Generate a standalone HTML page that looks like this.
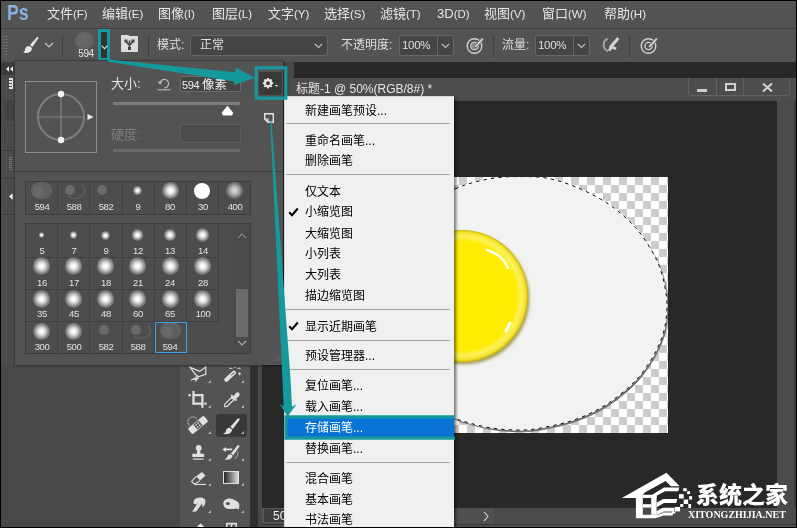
<!DOCTYPE html><html lang="zh-CN"><head><meta charset="utf-8"><title>Photoshop</title><style>
html,body{margin:0;padding:0;}
body{width:797px;height:528px;overflow:hidden;background:#535353;position:relative;
 font-family:"Liberation Sans","Noto Sans CJK SC",sans-serif;font-size:12px;color:#e6e6e6;}
.a{position:absolute;}
.t{position:absolute;white-space:nowrap;}
svg{position:absolute;overflow:visible;}
.mi{position:absolute;left:305px;color:#000;font-size:12px;line-height:20px;height:20px;white-space:nowrap;}
.ms{position:absolute;left:286px;width:164px;height:1px;background:#a5a5a5;}
.mb{position:absolute;top:0;height:27px;line-height:27px;font-size:13px;color:#e6e6e6;white-space:nowrap;}
.ob{position:absolute;font-size:12px;color:#dedede;white-space:nowrap;line-height:20px;height:20px;top:35px;}
.sep{position:absolute;width:1px;top:35px;height:22px;background:#3f3f3f;}
.bn{position:absolute;width:32px;text-align:center;font-size:9.5px;letter-spacing:-0.4px;line-height:12px;height:12px;color:#e4e4e4;}
.dot{position:absolute;border-radius:50%;}
.t,.mb,.ob,.mi,.bn{will-change:transform;}
.tri{position:absolute;width:0;height:0;border-left:3px solid transparent;border-bottom:3px solid #b0b0b0;}
</style></head><body>
<div class="a" style="left:0;top:0;width:797px;height:28px;background:#535353"></div>
<div class="a" style="left:0;top:28px;width:797px;height:1px;background:#404040"></div>
<div class="t" style="left:7px;top:1px;font-size:22px;line-height:24px;font-weight:bold;color:#8bb3e2;transform-origin:left center;transform:scaleX(0.8)">Ps</div>
<div class="mb" style="left:47px">文件<span style="font-size:11.5px">(F)</span></div>
<div class="mb" style="left:102px">编辑<span style="font-size:11.5px">(E)</span></div>
<div class="mb" style="left:158px">图像<span style="font-size:11.5px">(I)</span></div>
<div class="mb" style="left:212px">图层<span style="font-size:11.5px">(L)</span></div>
<div class="mb" style="left:268px">文字<span style="font-size:11.5px">(Y)</span></div>
<div class="mb" style="left:324px">选择<span style="font-size:11.5px">(S)</span></div>
<div class="mb" style="left:380px">滤镜<span style="font-size:11.5px">(T)</span></div>
<div class="mb" style="left:437px">3D<span style="font-size:11.5px">(D)</span></div>
<div class="mb" style="left:484px">视图<span style="font-size:11.5px">(V)</span></div>
<div class="mb" style="left:542px">窗口<span style="font-size:11.5px">(W)</span></div>
<div class="mb" style="left:604px">帮助<span style="font-size:11.5px">(H)</span></div>
<div class="a" style="left:0;top:29px;width:797px;height:33px;background:#535353"></div>
<div class="a" style="left:3px;top:36px;width:5px;height:20px;background:repeating-linear-gradient(#6a6a6a 0 1px,transparent 1px 3px)"></div>
<svg style="left:20px;top:34px" width="22" height="22" viewBox="0 0 22 22"><path d="M17.5 2.5 L10 11 L12.3 13 L18.6 4 Z" fill="#e8e8e8"/><path d="M9 12 C6.5 12 5 14 4.8 16.5 C4.7 17.5 3.8 18.3 3 18.6 C5.5 19.6 9.5 19 11.3 16.5 C12.2 15.2 12 13.8 11.3 13.2 Z" fill="#e8e8e8"/></svg>
<svg style="left:44px;top:42px" width="10" height="7" viewBox="0 0 10 7"><path d="M1 1 L5 5 L9 1" fill="none" stroke="#c8c8c8" stroke-width="1.2"/></svg>
<div class="sep" style="left:62px"></div>
<div class="dot" style="left:75px;top:32px;width:19px;height:17px;background:radial-gradient(ellipse at 45% 45%,#6a6a6a 0,#646464 60%,#5c5c5c 100%)"></div>
<div class="t" style="left:71px;top:48px;width:30px;text-align:center;font-size:10px;letter-spacing:-0.4px;line-height:11px;color:#e8e8e8">594</div>
<div class="a" style="left:98.2px;top:29.2px;width:6px;height:25.6px;background:#333;border:3px solid #149a9c"></div>
<svg style="left:100.7px;top:44.5px" width="7" height="5" viewBox="0 0 7 5"><path d="M0.6 0.6 L3.5 3.6 L6.4 0.6" fill="none" stroke="#e0e0e0" stroke-width="1.1"/></svg>
<div class="a" style="left:121px;top:36px;width:17px;height:16px;background:#dcdcdc;border-radius:1px"></div>
<div class="a" style="left:121px;top:35px;width:8px;height:3px;background:#dcdcdc;border-radius:1px"></div>
<svg style="left:121px;top:36px" width="17" height="16" viewBox="0 0 17 16"><path d="M8.5 13.5 L8.5 8 M8.5 9.5 L5 5.5 M8.5 9.5 L12 5.5 M8.5 8 L8.5 4.5" stroke="#444" stroke-width="1.6" fill="none"/><rect x="7" y="11" width="3" height="3" fill="#444"/><rect x="3.5" y="3.5" width="3" height="3" fill="#444"/><rect x="10.5" y="3.5" width="3" height="3" fill="#444"/></svg>
<div class="sep" style="left:148px"></div>
<div class="ob" style="left:157px">模式:</div>
<div class="a" style="left:190px;top:35px;width:136px;height:19px;background:#454545;border:1px solid #666;border-radius:3px"></div>
<div class="ob" style="left:200px;top:35px;line-height:21px">正常</div>
<svg style="left:314px;top:43px" width="9" height="6" viewBox="0 0 9 6"><path d="M0.8 0.8 L4.5 4.5 L8.2 0.8" fill="none" stroke="#c8c8c8" stroke-width="1.1"/></svg>
<div class="ob" style="left:341px">不透明度:</div>
<div class="a" style="left:399px;top:35px;width:53px;height:19px;background:#454545;border:1px solid #666;border-radius:3px"></div>
<div class="a" style="left:437px;top:36px;width:1px;height:19px;background:#666"></div>
<div class="ob" style="left:402px;top:35px;line-height:21px;font-size:11.5px;letter-spacing:-0.3px">100%</div>
<svg style="left:441px;top:43px" width="9" height="6" viewBox="0 0 9 6"><path d="M0.8 0.8 L4.5 4.5 L8.2 0.8" fill="none" stroke="#c8c8c8" stroke-width="1.1"/></svg>
<svg style="left:465px;top:34px" width="22" height="22" viewBox="0 0 22 22"><circle cx="9.5" cy="12" r="7.3" fill="none" stroke="#d0d0d0" stroke-width="1.4"/><circle cx="9.5" cy="12" r="4" fill="#8d8d8d" stroke="#d0d0d0" stroke-width="1"/><path d="M9 12.5 L17 3.5 L19 5.3 L11 14 Z" fill="#d0d0d0" stroke="#535353" stroke-width="0.8"/></svg>
<div class="sep" style="left:493px"></div>
<div class="ob" style="left:502px">流量:</div>
<div class="a" style="left:535px;top:35px;width:53px;height:19px;background:#454545;border:1px solid #666;border-radius:3px"></div>
<div class="a" style="left:573px;top:36px;width:1px;height:19px;background:#666"></div>
<div class="ob" style="left:538px;top:35px;line-height:21px;font-size:11.5px;letter-spacing:-0.3px">100%</div>
<svg style="left:577px;top:43px" width="9" height="6" viewBox="0 0 9 6"><path d="M0.8 0.8 L4.5 4.5 L8.2 0.8" fill="none" stroke="#c8c8c8" stroke-width="1.1"/></svg>
<svg style="left:600px;top:35px" width="22" height="20" viewBox="0 0 26 24"><path d="M9 4.5 C4.5 6 3 11 5 15.5 C6 17.5 8 19 9.5 19.5" fill="none" stroke="#a4a4a4" stroke-width="2.4"/><path d="M20.5 2.5 L11.5 12.5 L9.5 18.5 L12.5 19.5 L13.8 16.5 L18.5 18 L19.8 15.2 L16 13.5 L23 5 Z" fill="#d2d2d2"/></svg>
<div class="sep" style="left:629px"></div>
<svg style="left:639px;top:34px" width="22" height="22" viewBox="0 0 22 22"><circle cx="9.5" cy="12" r="7.3" fill="none" stroke="#d0d0d0" stroke-width="1.4"/><circle cx="9.5" cy="12" r="3.6" fill="none" stroke="#d0d0d0" stroke-width="1.3"/><path d="M9 12.5 L17 3.5 L19 5.3 L11 14 Z" fill="#d0d0d0" stroke="#535353" stroke-width="0.8"/></svg>
<div class="a" style="left:0;top:62px;width:15px;height:304px;background:#4b4b4b"></div>
<div class="a" style="left:0;top:62px;width:15px;height:13px;background:#3c3c3c"></div>
<svg style="left:6px;top:66px" width="8" height="6" viewBox="0 0 8 6"><path d="M0 3 L3 0.3 V5.7 Z M4 3 L7 0.3 V5.7 Z" fill="#ececec"/></svg>
<div class="a" style="left:9px;top:78px;width:4px;height:11px;background:#e4e4e4"></div>
<div class="a" style="left:9px;top:80px;width:3px;height:7px;background:repeating-linear-gradient(#4b4b4b 0 1px,transparent 1px 3px)"></div>
<div class="a" style="left:5px;top:100px;width:12px;height:20px;background:#434343;border-radius:3px"></div>
<div class="a" style="left:4px;top:125px;width:12px;height:21px;border:1px solid #424242;border-radius:3px"></div>
<div class="a" style="left:0;top:150px;width:15px;height:1px;background:#3e3e3e"></div>
<div class="a" style="left:9px;top:157px;width:3px;height:13px;background:repeating-linear-gradient(#777 0 1px,transparent 1px 2px)"></div>
<div class="a" style="left:0;top:178px;width:15px;height:1px;background:#3e3e3e"></div>
<div class="a" style="left:0;top:214px;width:15px;height:1px;background:#3e3e3e"></div>
<svg style="left:9px;top:193px" width="4" height="7" viewBox="0 0 4 7"><path d="M0 3.5 L3.6 0.3 V6.7 Z" fill="#f0f0f0"/></svg>
<div class="a" style="left:0;top:366px;width:180px;height:162px;background:#484848"></div>
<div class="a" style="left:180px;top:366px;width:70px;height:162px;background:#535353"></div>
<div class="a" style="left:250px;top:366px;width:8px;height:162px;background:#2f2f2f"></div>
<div class="a" style="left:258px;top:366px;width:4px;height:162px;background:#484848"></div>
<div class="a" style="left:216px;top:414px;width:31px;height:23px;background:#383838;border-radius:3px"></div>
<svg style="left:0;top:0" width="797" height="528" viewBox="0 0 797 528"><path d="M190.3 367.4 L199.7 371.4 L205.8 366.9 L205.8 374.3 L198.2 376.9 L194.8 373.8 Z" fill="none" stroke="#e0e0e0" stroke-width="1.2" stroke-linejoin="miter"/><circle cx="197.2" cy="377" r="1.2" fill="none" stroke="#e0e0e0" stroke-width="0.9"/><path d="M196.2 377.6 L190.8 380.2 M197.6 378.2 L195.3 381.6 M192.5 379.5 L198.5 378.4" stroke="#e0e0e0" stroke-width="1.1" fill="none"/><path d="M226.3 379.7 L233.9 372.7" stroke="#e0e0e0" stroke-width="4.2" stroke-linecap="round"/><path d="M231.6 374.8 L233.8 372.8" stroke="#9a9a9a" stroke-width="1.6" stroke-linecap="round"/><path d="M229.3 368.3 H232.3 M237.6 368.3 H240.6 M239.6 372.3 V375.3 M238.1 373.8 H241.1 M235 366.5 V368" stroke="#e0e0e0" stroke-width="1" fill="none"/><path d="M193.5 391 V404.8 M193.5 395.2 H203.6 M202.4 394.1 V407.8 M192.3 403.6 H203.6" stroke="#e0e0e0" stroke-width="2.3" fill="none"/><rect x="188.4" y="394.1" width="2.4" height="2.2" fill="#e0e0e0"/><rect x="204.4" y="402.5" width="2.3" height="2.2" fill="#e0e0e0"/><path d="M224.6 406.6 L224.9 404.2 L231.6 397.4 L234 399.8 L227.2 406.3 Z" fill="#535353" stroke="#e0e0e0" stroke-width="1.2" stroke-linejoin="round"/><path d="M230.5 396 L235.8 401.3 L237.2 399.9 L231.9 394.6 Z" fill="#e0e0e0"/><path d="M233.2 396.2 L236 393.2 Q238 391.6 239.3 393 Q240.4 394.4 238.9 396.2 L235.8 398.9 Z" fill="#e0e0e0"/><g transform="rotate(-40 198 425)"><rect x="187.6" y="421.2" width="20.8" height="7.6" rx="1.6" fill="#e0e0e0"/><rect x="194.6" y="421.9" width="6.8" height="6.2" fill="#535353"/><circle cx="196.7" cy="423.7" r="0.85" fill="#e0e0e0"/><circle cx="199.3" cy="423.7" r="0.85" fill="#e0e0e0"/><circle cx="196.7" cy="426.3" r="0.85" fill="#e0e0e0"/><circle cx="199.3" cy="426.3" r="0.85" fill="#e0e0e0"/></g><path d="M189.2 425.5 A4.3 4.3 0 0 1 196.6 418.6" fill="none" stroke="#e0e0e0" stroke-width="1.1" stroke-dasharray="1 1"/><path d="M237.8 418.4 L230.4 426.8 L232.8 429 L239.6 420 Q240 418 237.8 418.4 Z" fill="#e0e0e0"/><path d="M229.8 427.8 C227.6 427.6 226.2 429.2 225.9 431.2 C225.8 432.2 224.4 433.2 222.9 433.6 C225.4 434.8 229.4 434.4 231.2 432 C232.2 430.7 232.3 429.8 231.7 429.3 Z" fill="#e0e0e0"/><circle cx="198.7" cy="448" r="2.9" fill="#e0e0e0"/><path d="M197.3 450 H200.1 L200.6 454 H196.8 Z" fill="#e0e0e0"/><rect x="192.3" y="453.7" width="11.8" height="3.4" rx="0.6" fill="#e0e0e0"/><rect x="192.8" y="458.5" width="10.8" height="1.2" fill="#e0e0e0"/><path d="M237.8 445 L231 453.4 L233.2 455.4 L239.4 446.6 Q239.8 444.8 237.8 445 Z" fill="#e0e0e0"/><path d="M230.6 454.2 C228.8 454 227.5 455.4 227.2 457 C227.1 458 225.9 458.8 224.8 459.2 C226.9 460.2 230.2 459.8 231.7 457.8 C232.5 456.7 232.6 455.9 232.1 455.4 Z" fill="#e0e0e0"/><path d="M222.4 449.4 L226 446.9 V448.6 H232.2 V450.2 H226 V451.9 Z" fill="#e0e0e0"/><path d="M237.6 451.6 A6 6 0 0 1 234.4 458.6" fill="none" stroke="#e0e0e0" stroke-width="1.1" stroke-dasharray="1 1"/><path d="M196.2 476.3 L201.8 471.9 L205.6 475.5 L200 480.6 Z" fill="#e0e0e0"/><path d="M196.2 476.3 L191.6 481.4 L194.6 484.2 L200 480.6" fill="none" stroke="#e0e0e0" stroke-width="1.1"/><path d="M194.4 484.4 H206" stroke="#e0e0e0" stroke-width="1.1"/><path d="M193.6 503.6 Q193 499.4 197 498 Q201.6 496.8 204.6 499 Q206.2 501.6 204.6 505 L202.6 507.6 L202 503.4 L196.2 511.6 L192.2 511.8 L197.6 503 Q195.6 505.2 193.6 503.6 Z" fill="#e0e0e0"/><path d="M223.2 503 Q224.4 499 228.6 498.6 Q234.6 498.8 238.6 502.8 Q239.8 504.6 239.2 507.4 L238.6 509.6 L236.4 508.4 Q231 509.8 226.2 508.4 Q223.2 506.6 223.2 503 Z" fill="#e0e0e0"/><ellipse cx="227.9" cy="503.5" rx="2" ry="1.6" fill="#535353"/><path d="M200.6 523.2 L205.4 528 H195.8 Z" fill="#e0e0e0"/><path d="M226 522.8 H237 V528 H235.4 V524.6 H232.3 V528 H230.7 V524.6 H227.6 V528 H226 Z" fill="#e0e0e0"/></svg>
<div class="a" style="left:222.7px;top:471px;width:14.3px;height:10.6px;border:1.2px solid #e0e0e0;background:linear-gradient(90deg,#262626,#d8d8d8)"></div>
<div class="tri" style="left:208.0px;top:379.5px"></div>
<div class="tri" style="left:241.0px;top:379.5px"></div>
<div class="tri" style="left:208.0px;top:405.0px"></div>
<div class="tri" style="left:241.0px;top:405.0px"></div>
<div class="tri" style="left:208.0px;top:430.6px"></div>
<div class="tri" style="left:241.0px;top:430.6px"></div>
<div class="tri" style="left:208.0px;top:457.5px"></div>
<div class="tri" style="left:241.0px;top:457.5px"></div>
<div class="tri" style="left:208.0px;top:482.5px"></div>
<div class="tri" style="left:241.0px;top:482.5px"></div>
<div class="tri" style="left:208.0px;top:510.0px"></div>
<div class="tri" style="left:241.0px;top:510.0px"></div>
<div class="a" style="left:283px;top:62px;width:11px;height:40px;background:#474747"></div>
<div class="a" style="left:294px;top:62px;width:503px;height:16px;background:#282828"></div>
<div class="a" style="left:262px;top:101px;width:535px;height:427px;background:#282828"></div>
<div class="a" style="left:290px;top:78px;width:506px;height:23px;background:#4d4d4d;border-radius:0 5px 0 0"></div>
<div class="t" style="left:296px;top:78px;font-size:12px;line-height:23px;color:#e4e4e4">标题-1 @ 50%(RGB/8#) *</div>
<div class="a" style="left:688px;top:78px;width:102px;height:18px;border:1px solid #626262;border-top:none;border-radius:0 0 3px 3px;box-sizing:border-box"></div>
<div class="a" style="left:716px;top:78px;width:1px;height:18px;background:#626262"></div>
<div class="a" style="left:743px;top:78px;width:1px;height:18px;background:#626262"></div>
<div class="a" style="left:697px;top:89px;width:10px;height:3px;background:#d0d0d0"></div>
<div class="a" style="left:725px;top:83px;width:7px;height:4px;border:2px solid #d0d0d0"></div>
<svg style="left:762px;top:83px" width="11" height="9" viewBox="0 0 11 9"><path d="M1 0.5 L10 8.5 M10 0.5 L1 8.5" stroke="#d0d0d0" stroke-width="2.2"/></svg>
<div class="a" style="left:777px;top:101px;width:17px;height:407px;background:#4a4a4a"></div>
<div class="a" style="left:794px;top:101px;width:2px;height:427px;background:#3a3a3a"></div>
<div class="a" style="left:262px;top:508px;width:534px;height:16px;background:#4a4a4a"></div>
<div class="a" style="left:262px;top:508px;width:232px;height:16px;background:#505050"></div>
<div class="a" style="left:262px;top:524px;width:534px;height:1px;background:#383838"></div>
<div class="a" style="left:262px;top:525px;width:534px;height:3px;background:#4d4d4d"></div>
<div class="a" style="left:263px;top:508px;width:30px;height:15px;background:#3e3e3e;border:1px solid #5a5a5a;box-sizing:border-box"></div>
<div class="t" style="left:273px;top:509px;font-size:12px;line-height:14px;color:#eee">50%</div>
<svg style="left:483px;top:511px" width="6" height="11" viewBox="0 0 6 11"><path d="M1 0.8 L5 5.5 L1 10.2" fill="none" stroke="#d0d0d0" stroke-width="1.1"/></svg>
<div class="a" style="left:378px;top:177px;width:290px;height:256px;overflow:hidden;background-color:#fff;background-image:linear-gradient(45deg,#ccc 25%,transparent 25%,transparent 75%,#ccc 75%),linear-gradient(45deg,#ccc 25%,transparent 25%,transparent 75%,#ccc 75%);background-size:16px 16px;background-position:9px 0,17px 8px">
<svg style="left:0;top:0" width="290" height="256" viewBox="378 177 290 256"><defs><radialGradient id="yk" cx="50%" cy="50%" r="50%"><stop offset="0" stop-color="#ffec00"/><stop offset="0.82" stop-color="#ffec00"/><stop offset="0.90" stop-color="#fff15c"/><stop offset="0.96" stop-color="#f5e534"/><stop offset="1" stop-color="#cdb900"/></radialGradient><filter id="bl" x="-20%" y="-20%" width="140%" height="140%"><feGaussianBlur stdDeviation="1.6"/></filter><filter id="bl2" x="-20%" y="-20%" width="140%" height="140%"><feGaussianBlur stdDeviation="0.7"/></filter></defs><path d="M455.0 189.0 C462.8 185.5 467.8 183.9 475.0 182.0 C482.2 180.1 490.3 178.5 498.0 177.6 C505.7 176.7 513.2 176.6 521.0 176.6 C528.8 176.6 537.2 176.6 545.0 177.8 C552.8 179.0 560.5 181.4 568.0 184.0 C575.5 186.6 582.5 189.6 590.0 193.4 C597.5 197.2 605.1 201.3 612.7 207.0 C620.3 212.7 629.0 220.3 635.5 227.5 C642.0 234.7 647.2 243.2 651.4 250.2 C655.6 257.2 658.2 263.2 660.5 269.5 C662.8 275.8 663.9 281.7 665.0 287.7 C666.1 293.7 667.1 298.4 667.0 305.3 C666.9 312.2 666.1 321.7 664.3 329.2 C662.5 336.7 659.8 343.3 656.3 350.4 C652.8 357.5 647.4 365.6 643.0 371.6 C638.6 377.6 635.3 381.1 629.8 386.2 C624.3 391.3 616.5 397.5 610.0 402.0 C603.5 406.5 597.2 409.9 590.6 413.1 C584.0 416.3 577.2 418.9 570.5 421.1 C563.8 423.3 557.1 424.7 550.4 426.1 C543.7 427.5 537.0 429.0 530.3 429.6 C523.6 430.2 516.9 430.1 510.2 429.8 C503.5 429.5 496.9 428.9 490.2 427.8 C483.5 426.7 475.9 424.7 470.0 423.1 C464.1 421.5 462.5 421.5 455.0 418.1 C447.5 414.8 434.2 409.4 425.0 403.0 C415.8 396.6 406.8 389.7 400.0 380.0 C393.2 370.3 387.7 357.5 384.0 345.0 C380.3 332.5 378.0 318.8 378.0 305.0 C378.0 291.2 380.0 275.3 384.0 262.0 C388.0 248.7 394.7 234.8 402.0 225.0 C409.3 215.2 419.2 209.0 428.0 203.0 C436.8 197.0 447.2 192.5 455.0 189.0 Z" transform="translate(1.3 1.7)" fill="#6a6a6a" stroke="#6a6a6a" stroke-width="0.8" filter="url(#bl2)"/><path d="M455.0 189.0 C462.8 185.5 467.8 183.9 475.0 182.0 C482.2 180.1 490.3 178.5 498.0 177.6 C505.7 176.7 513.2 176.6 521.0 176.6 C528.8 176.6 537.2 176.6 545.0 177.8 C552.8 179.0 560.5 181.4 568.0 184.0 C575.5 186.6 582.5 189.6 590.0 193.4 C597.5 197.2 605.1 201.3 612.7 207.0 C620.3 212.7 629.0 220.3 635.5 227.5 C642.0 234.7 647.2 243.2 651.4 250.2 C655.6 257.2 658.2 263.2 660.5 269.5 C662.8 275.8 663.9 281.7 665.0 287.7 C666.1 293.7 667.1 298.4 667.0 305.3 C666.9 312.2 666.1 321.7 664.3 329.2 C662.5 336.7 659.8 343.3 656.3 350.4 C652.8 357.5 647.4 365.6 643.0 371.6 C638.6 377.6 635.3 381.1 629.8 386.2 C624.3 391.3 616.5 397.5 610.0 402.0 C603.5 406.5 597.2 409.9 590.6 413.1 C584.0 416.3 577.2 418.9 570.5 421.1 C563.8 423.3 557.1 424.7 550.4 426.1 C543.7 427.5 537.0 429.0 530.3 429.6 C523.6 430.2 516.9 430.1 510.2 429.8 C503.5 429.5 496.9 428.9 490.2 427.8 C483.5 426.7 475.9 424.7 470.0 423.1 C464.1 421.5 462.5 421.5 455.0 418.1 C447.5 414.8 434.2 409.4 425.0 403.0 C415.8 396.6 406.8 389.7 400.0 380.0 C393.2 370.3 387.7 357.5 384.0 345.0 C380.3 332.5 378.0 318.8 378.0 305.0 C378.0 291.2 380.0 275.3 384.0 262.0 C388.0 248.7 394.7 234.8 402.0 225.0 C409.3 215.2 419.2 209.0 428.0 203.0 C436.8 197.0 447.2 192.5 455.0 189.0 Z" fill="#f2f2f2"/><path d="M455.0 189.0 C462.8 185.5 467.8 183.9 475.0 182.0 C482.2 180.1 490.3 178.5 498.0 177.6 C505.7 176.7 513.2 176.6 521.0 176.6 C528.8 176.6 537.2 176.6 545.0 177.8 C552.8 179.0 560.5 181.4 568.0 184.0 C575.5 186.6 582.5 189.6 590.0 193.4 C597.5 197.2 605.1 201.3 612.7 207.0 C620.3 212.7 629.0 220.3 635.5 227.5 C642.0 234.7 647.2 243.2 651.4 250.2 C655.6 257.2 658.2 263.2 660.5 269.5 C662.8 275.8 663.9 281.7 665.0 287.7 C666.1 293.7 667.1 298.4 667.0 305.3 C666.9 312.2 666.1 321.7 664.3 329.2 C662.5 336.7 659.8 343.3 656.3 350.4 C652.8 357.5 647.4 365.6 643.0 371.6 C638.6 377.6 635.3 381.1 629.8 386.2 C624.3 391.3 616.5 397.5 610.0 402.0 C603.5 406.5 597.2 409.9 590.6 413.1 C584.0 416.3 577.2 418.9 570.5 421.1 C563.8 423.3 557.1 424.7 550.4 426.1 C543.7 427.5 537.0 429.0 530.3 429.6 C523.6 430.2 516.9 430.1 510.2 429.8 C503.5 429.5 496.9 428.9 490.2 427.8 C483.5 426.7 475.9 424.7 470.0 423.1 C464.1 421.5 462.5 421.5 455.0 418.1 C447.5 414.8 434.2 409.4 425.0 403.0 C415.8 396.6 406.8 389.7 400.0 380.0 C393.2 370.3 387.7 357.5 384.0 345.0 C380.3 332.5 378.0 318.8 378.0 305.0 C378.0 291.2 380.0 275.3 384.0 262.0 C388.0 248.7 394.7 234.8 402.0 225.0 C409.3 215.2 419.2 209.0 428.0 203.0 C436.8 197.0 447.2 192.5 455.0 189.0 Z" fill="none" stroke="#fff" stroke-width="1.1"/><path d="M455.0 189.0 C462.8 185.5 467.8 183.9 475.0 182.0 C482.2 180.1 490.3 178.5 498.0 177.6 C505.7 176.7 513.2 176.6 521.0 176.6 C528.8 176.6 537.2 176.6 545.0 177.8 C552.8 179.0 560.5 181.4 568.0 184.0 C575.5 186.6 582.5 189.6 590.0 193.4 C597.5 197.2 605.1 201.3 612.7 207.0 C620.3 212.7 629.0 220.3 635.5 227.5 C642.0 234.7 647.2 243.2 651.4 250.2 C655.6 257.2 658.2 263.2 660.5 269.5 C662.8 275.8 663.9 281.7 665.0 287.7 C666.1 293.7 667.1 298.4 667.0 305.3 C666.9 312.2 666.1 321.7 664.3 329.2 C662.5 336.7 659.8 343.3 656.3 350.4 C652.8 357.5 647.4 365.6 643.0 371.6 C638.6 377.6 635.3 381.1 629.8 386.2 C624.3 391.3 616.5 397.5 610.0 402.0 C603.5 406.5 597.2 409.9 590.6 413.1 C584.0 416.3 577.2 418.9 570.5 421.1 C563.8 423.3 557.1 424.7 550.4 426.1 C543.7 427.5 537.0 429.0 530.3 429.6 C523.6 430.2 516.9 430.1 510.2 429.8 C503.5 429.5 496.9 428.9 490.2 427.8 C483.5 426.7 475.9 424.7 470.0 423.1 C464.1 421.5 462.5 421.5 455.0 418.1 C447.5 414.8 434.2 409.4 425.0 403.0 C415.8 396.6 406.8 389.7 400.0 380.0 C393.2 370.3 387.7 357.5 384.0 345.0 C380.3 332.5 378.0 318.8 378.0 305.0 C378.0 291.2 380.0 275.3 384.0 262.0 C388.0 248.7 394.7 234.8 402.0 225.0 C409.3 215.2 419.2 209.0 428.0 203.0 C436.8 197.0 447.2 192.5 455.0 189.0 Z" fill="none" stroke="#111" stroke-width="1" stroke-dasharray="3.5 4"/><circle cx="463.5" cy="298.5" r="66" fill="#8a7f20" opacity="0.7" filter="url(#bl)"/><circle cx="462" cy="296" r="66" fill="url(#yk)"/><path d="M487 250 C497 253 504 259 508 268" fill="none" stroke="#fff" stroke-width="2.4" stroke-linecap="round" opacity="0.95"/><path d="M506 331 L510 323" fill="none" stroke="#fff" stroke-width="3" stroke-linecap="round" opacity="0.95"/></svg>
</div>
<div class="a" style="left:14px;top:60px;width:269px;height:305px;background:#535353;border-left:1px solid #3a3a3a;border-top:1px solid #3a3a3a;box-sizing:border-box;box-shadow:1px 1px 2px rgba(0,0,0,0.5)"></div>
<div class="a" style="left:25px;top:81px;width:72px;height:72px;border:1px solid #8c8c8c;box-sizing:border-box"></div>
<svg style="left:25px;top:81px" width="72" height="71" viewBox="25 81 72 71"><circle cx="61" cy="117" r="23" fill="none" stroke="#7e7e7e" stroke-width="2"/><path d="M38 117 H84 M61 94 V140" stroke="#848484" stroke-width="1.2"/><circle cx="61" cy="94" r="3.2" fill="#f4f4f4"/><circle cx="61" cy="140" r="3.2" fill="#f4f4f4"/><path d="M87.5 114 L93.5 117 L87.5 120 Z" fill="#ededed"/></svg>
<div class="t" style="left:111px;top:74px;font-size:13px;line-height:20px;color:#e6e6e6">大小:</div>
<svg style="left:157px;top:77px" width="14" height="14" viewBox="0 0 14 14"><path d="M3.2 6.5 A4.2 4.2 0 1 1 7.2 10.8" fill="none" stroke="#b4b4b4" stroke-width="1.3"/><path d="M0.6 4.4 L5.6 4.4 L3.1 8 Z" fill="#b4b4b4"/><path d="M0.5 12.8 H13.5" stroke="#b4b4b4" stroke-width="1.1"/></svg>
<div class="a" style="left:180px;top:76px;width:61px;height:16px;background:#454545;border:1px solid #6a6a6a;box-sizing:border-box;border-radius:2px"></div>
<div class="t" style="left:182px;top:76.5px;font-size:12.5px;line-height:16px;color:#f0f0f0"><span style="font-size:11px;letter-spacing:-0.4px">594</span><span style="font-size:10px"> </span>像素</div>
<div class="a" style="left:113px;top:102px;width:127px;height:3px;background:#7c7c7c"></div>
<svg style="left:221px;top:104.5px" width="13" height="12" viewBox="0 0 13 12"><path d="M6.5 0.8 L11.8 7.2 Q12.4 10.6 9.5 10.6 L3.5 10.6 Q0.6 10.6 1.2 7.2 Z" fill="#fff"/></svg>
<div class="t" style="left:111px;top:125px;font-size:13px;line-height:20px;color:#7d7d7d">硬度:</div>
<div class="a" style="left:180px;top:124px;width:61px;height:19px;background:#4c4c4c;border:1px solid #5e5e5e;box-sizing:border-box;border-radius:2px"></div>
<div class="a" style="left:113px;top:149px;width:127px;height:3px;background:#6a6a6a"></div>
<div class="a" style="left:15px;top:171px;width:268px;height:1px;background:#3c3c3c"></div>
<svg style="left:264px;top:113px" width="10" height="10" viewBox="0 0 10 10"><path d="M0.7 0.7 H9.3 V9.3 H4 L0.7 6 Z" fill="none" stroke="#e6e6e6" stroke-width="1.4"/><path d="M0.7 6 H4 V9.3" fill="none" stroke="#e6e6e6" stroke-width="1.2"/></svg>
<div class="a" style="left:259px;top:72px;width:23px;height:23px;background:#393939;border-radius:2px"></div>
<svg style="left:262px;top:76px" width="20" height="14" viewBox="0 0 20 14"><g transform="translate(6 7.2) scale(0.84)"><circle r="3.6" fill="none" stroke="#e8e8e8" stroke-width="2.6"/><g stroke="#e8e8e8" stroke-width="2.4"><path d="M0 -6.2 V-3.5"/><path d="M0 6.2 V3.5"/><path d="M-6.2 0 H-3.5"/><path d="M6.2 0 H3.5"/><path d="M-4.4 -4.4 L-2.6 -2.6"/><path d="M4.4 4.4 L2.6 2.6"/><path d="M-4.4 4.4 L-2.6 2.6"/><path d="M4.4 -4.4 L2.6 -2.6"/></g></g><path d="M12.8 9 H16.2 L14.5 10.8 Z" fill="#e8e8e8"/></svg>
<div class="a" style="left:25px;top:181px;width:226px;height:34px;background:#4d4d4d;border:1px solid #3c3c3c;box-sizing:border-box"></div>
<div class="a" style="left:57.2px;top:182px;width:1px;height:32px;background:#404040"></div>
<div class="a" style="left:89.4px;top:182px;width:1px;height:32px;background:#404040"></div>
<div class="a" style="left:121.6px;top:182px;width:1px;height:32px;background:#404040"></div>
<div class="a" style="left:153.8px;top:182px;width:1px;height:32px;background:#404040"></div>
<div class="a" style="left:186.0px;top:182px;width:1px;height:32px;background:#404040"></div>
<div class="a" style="left:218.2px;top:182px;width:1px;height:32px;background:#404040"></div>
<div class="bn" style="left:25.5px;top:200.5px">594</div>
<div class="bn" style="left:57.7px;top:200.5px">588</div>
<div class="bn" style="left:89.9px;top:200.5px">582</div>
<div class="bn" style="left:122.1px;top:200.5px">9</div>
<div class="bn" style="left:154.3px;top:200.5px">80</div>
<div class="bn" style="left:186.5px;top:200.5px">30</div>
<div class="bn" style="left:218.7px;top:200.5px">400</div>
<div class="dot" style="left:30.8px;top:181.5px;width:21px;height:17px;background:#5f5f5f;border:1px solid #696969;box-sizing:border-box"></div>
<div class="dot" style="left:33.3px;top:185.5px;width:11px;height:11px;background:#696969"></div>
<div class="dot" style="left:64.5px;top:181.5px;width:20px;height:17px;border:1px solid #666;border-left-color:transparent;border-top-color:transparent;box-sizing:border-box"></div>
<div class="dot" style="left:64.5px;top:184.5px;width:10px;height:10px;background:#6b6b6b"></div>
<div class="dot" style="left:96.7px;top:184.5px;width:10px;height:10px;background:#6b6b6b"></div>
<div class="dot" style="left:133.4px;top:186.0px;width:9.0px;height:9.0px;background:radial-gradient(circle,rgba(255,255,255,1.00) 0,rgba(255,255,255,0.95) 18%,rgba(255,255,255,0.68) 38%,rgba(255,255,255,0.33) 58%,rgba(255,255,255,0.10) 78%,rgba(255,255,255,0) 100%)"></div>
<div class="dot" style="left:161.5px;top:181.9px;width:17.2px;height:17.2px;background:radial-gradient(circle,rgba(255,255,255,1.00) 0,rgba(255,255,255,0.95) 18%,rgba(255,255,255,0.68) 38%,rgba(255,255,255,0.33) 58%,rgba(255,255,255,0.10) 78%,rgba(255,255,255,0) 100%)"></div>
<div class="dot" style="left:194.3px;top:182.5px;width:16px;height:16px;background:#fff"></div>
<div class="dot" style="left:225.7px;top:181.7px;width:17.6px;height:17.6px;background:radial-gradient(circle,rgba(255,255,255,0.75) 0,rgba(255,255,255,0.71) 18%,rgba(255,255,255,0.51) 38%,rgba(255,255,255,0.25) 58%,rgba(255,255,255,0.08) 78%,rgba(255,255,255,0) 100%)"></div>
<div class="a" style="left:25px;top:223px;width:226px;height:131px;background:#4d4d4d;border:1px solid #3c3c3c;box-sizing:border-box"></div>
<div class="a" style="left:26px;top:256.9px;width:192px;height:1px;background:#404040"></div>
<div class="a" style="left:26px;top:289.0px;width:192px;height:1px;background:#404040"></div>
<div class="a" style="left:26px;top:321.0px;width:192px;height:1px;background:#404040"></div>
<div class="a" style="left:57.2px;top:224px;width:1px;height:130px;background:#404040"></div>
<div class="a" style="left:89.4px;top:224px;width:1px;height:130px;background:#404040"></div>
<div class="a" style="left:121.6px;top:224px;width:1px;height:130px;background:#404040"></div>
<div class="a" style="left:153.8px;top:224px;width:1px;height:130px;background:#404040"></div>
<div class="a" style="left:186.0px;top:224px;width:1px;height:130px;background:#404040"></div>
<div class="a" style="left:218.2px;top:224px;width:1px;height:98px;background:#404040"></div>
<div class="a" style="left:186px;top:321px;width:33px;height:1px;background:#404040"></div>
<div class="bn" style="left:25.5px;top:244.5px">5</div>
<div class="dot" style="left:38.5px;top:232.2px;width:5.6px;height:5.6px;background:radial-gradient(circle,rgba(255,255,255,1.00) 0,rgba(255,255,255,0.95) 18%,rgba(255,255,255,0.68) 38%,rgba(255,255,255,0.33) 58%,rgba(255,255,255,0.10) 78%,rgba(255,255,255,0) 100%)"></div>
<div class="bn" style="left:57.7px;top:244.5px">7</div>
<div class="dot" style="left:69.9px;top:231.4px;width:7.2px;height:7.2px;background:radial-gradient(circle,rgba(255,255,255,1.00) 0,rgba(255,255,255,0.95) 18%,rgba(255,255,255,0.68) 38%,rgba(255,255,255,0.33) 58%,rgba(255,255,255,0.10) 78%,rgba(255,255,255,0) 100%)"></div>
<div class="bn" style="left:89.9px;top:244.5px">9</div>
<div class="dot" style="left:101.2px;top:230.5px;width:9.0px;height:9.0px;background:radial-gradient(circle,rgba(255,255,255,1.00) 0,rgba(255,255,255,0.95) 18%,rgba(255,255,255,0.68) 38%,rgba(255,255,255,0.33) 58%,rgba(255,255,255,0.10) 78%,rgba(255,255,255,0) 100%)"></div>
<div class="bn" style="left:122.1px;top:244.5px">12</div>
<div class="dot" style="left:132.3px;top:229.4px;width:11.2px;height:11.2px;background:radial-gradient(circle,rgba(255,255,255,1.00) 0,rgba(255,255,255,0.95) 18%,rgba(255,255,255,0.68) 38%,rgba(255,255,255,0.33) 58%,rgba(255,255,255,0.10) 78%,rgba(255,255,255,0) 100%)"></div>
<div class="bn" style="left:154.3px;top:244.5px">13</div>
<div class="dot" style="left:163.9px;top:228.8px;width:12.4px;height:12.4px;background:radial-gradient(circle,rgba(255,255,255,1.00) 0,rgba(255,255,255,0.95) 18%,rgba(255,255,255,0.68) 38%,rgba(255,255,255,0.33) 58%,rgba(255,255,255,0.10) 78%,rgba(255,255,255,0) 100%)"></div>
<div class="bn" style="left:186.5px;top:244.5px">14</div>
<div class="dot" style="left:195.7px;top:228.4px;width:13.2px;height:13.2px;background:radial-gradient(circle,rgba(255,255,255,1.00) 0,rgba(255,255,255,0.95) 18%,rgba(255,255,255,0.68) 38%,rgba(255,255,255,0.33) 58%,rgba(255,255,255,0.10) 78%,rgba(255,255,255,0) 100%)"></div>
<div class="bn" style="left:25.5px;top:276.6px">16</div>
<div class="dot" style="left:32.7px;top:257.4px;width:17.2px;height:17.2px;background:radial-gradient(circle,rgba(255,255,255,1.00) 0,rgba(255,255,255,0.95) 18%,rgba(255,255,255,0.68) 38%,rgba(255,255,255,0.33) 58%,rgba(255,255,255,0.10) 78%,rgba(255,255,255,0) 100%)"></div>
<div class="bn" style="left:57.7px;top:276.6px">17</div>
<div class="dot" style="left:64.9px;top:257.4px;width:17.2px;height:17.2px;background:radial-gradient(circle,rgba(255,255,255,1.00) 0,rgba(255,255,255,0.95) 18%,rgba(255,255,255,0.68) 38%,rgba(255,255,255,0.33) 58%,rgba(255,255,255,0.10) 78%,rgba(255,255,255,0) 100%)"></div>
<div class="bn" style="left:89.9px;top:276.6px">18</div>
<div class="dot" style="left:97.1px;top:257.4px;width:17.2px;height:17.2px;background:radial-gradient(circle,rgba(255,255,255,1.00) 0,rgba(255,255,255,0.95) 18%,rgba(255,255,255,0.68) 38%,rgba(255,255,255,0.33) 58%,rgba(255,255,255,0.10) 78%,rgba(255,255,255,0) 100%)"></div>
<div class="bn" style="left:122.1px;top:276.6px">21</div>
<div class="dot" style="left:129.3px;top:257.4px;width:17.2px;height:17.2px;background:radial-gradient(circle,rgba(255,255,255,1.00) 0,rgba(255,255,255,0.95) 18%,rgba(255,255,255,0.68) 38%,rgba(255,255,255,0.33) 58%,rgba(255,255,255,0.10) 78%,rgba(255,255,255,0) 100%)"></div>
<div class="bn" style="left:154.3px;top:276.6px">24</div>
<div class="dot" style="left:161.5px;top:257.4px;width:17.2px;height:17.2px;background:radial-gradient(circle,rgba(255,255,255,1.00) 0,rgba(255,255,255,0.95) 18%,rgba(255,255,255,0.68) 38%,rgba(255,255,255,0.33) 58%,rgba(255,255,255,0.10) 78%,rgba(255,255,255,0) 100%)"></div>
<div class="bn" style="left:186.5px;top:276.6px">28</div>
<div class="dot" style="left:193.7px;top:257.4px;width:17.2px;height:17.2px;background:radial-gradient(circle,rgba(255,255,255,1.00) 0,rgba(255,255,255,0.95) 18%,rgba(255,255,255,0.68) 38%,rgba(255,255,255,0.33) 58%,rgba(255,255,255,0.10) 78%,rgba(255,255,255,0) 100%)"></div>
<div class="bn" style="left:25.5px;top:308.2px">35</div>
<div class="dot" style="left:32.7px;top:290.4px;width:17.2px;height:17.2px;background:radial-gradient(circle,rgba(255,255,255,1.00) 0,rgba(255,255,255,0.95) 18%,rgba(255,255,255,0.68) 38%,rgba(255,255,255,0.33) 58%,rgba(255,255,255,0.10) 78%,rgba(255,255,255,0) 100%)"></div>
<div class="bn" style="left:57.7px;top:308.2px">45</div>
<div class="dot" style="left:64.9px;top:290.4px;width:17.2px;height:17.2px;background:radial-gradient(circle,rgba(255,255,255,1.00) 0,rgba(255,255,255,0.95) 18%,rgba(255,255,255,0.68) 38%,rgba(255,255,255,0.33) 58%,rgba(255,255,255,0.10) 78%,rgba(255,255,255,0) 100%)"></div>
<div class="bn" style="left:89.9px;top:308.2px">48</div>
<div class="dot" style="left:97.1px;top:290.4px;width:17.2px;height:17.2px;background:radial-gradient(circle,rgba(255,255,255,1.00) 0,rgba(255,255,255,0.95) 18%,rgba(255,255,255,0.68) 38%,rgba(255,255,255,0.33) 58%,rgba(255,255,255,0.10) 78%,rgba(255,255,255,0) 100%)"></div>
<div class="bn" style="left:122.1px;top:308.2px">60</div>
<div class="dot" style="left:129.3px;top:290.4px;width:17.2px;height:17.2px;background:radial-gradient(circle,rgba(255,255,255,1.00) 0,rgba(255,255,255,0.95) 18%,rgba(255,255,255,0.68) 38%,rgba(255,255,255,0.33) 58%,rgba(255,255,255,0.10) 78%,rgba(255,255,255,0) 100%)"></div>
<div class="bn" style="left:154.3px;top:308.2px">65</div>
<div class="dot" style="left:161.5px;top:290.4px;width:17.2px;height:17.2px;background:radial-gradient(circle,rgba(255,255,255,1.00) 0,rgba(255,255,255,0.95) 18%,rgba(255,255,255,0.68) 38%,rgba(255,255,255,0.33) 58%,rgba(255,255,255,0.10) 78%,rgba(255,255,255,0) 100%)"></div>
<div class="bn" style="left:186.5px;top:308.2px">100</div>
<div class="dot" style="left:193.7px;top:290.4px;width:17.2px;height:17.2px;background:radial-gradient(circle,rgba(255,255,255,1.00) 0,rgba(255,255,255,0.95) 18%,rgba(255,255,255,0.68) 38%,rgba(255,255,255,0.33) 58%,rgba(255,255,255,0.10) 78%,rgba(255,255,255,0) 100%)"></div>
<div class="bn" style="left:25.5px;top:340.5px">300</div>
<div class="dot" style="left:32.7px;top:322.9px;width:17.2px;height:17.2px;background:radial-gradient(circle,rgba(255,255,255,1.00) 0,rgba(255,255,255,0.95) 18%,rgba(255,255,255,0.68) 38%,rgba(255,255,255,0.33) 58%,rgba(255,255,255,0.10) 78%,rgba(255,255,255,0) 100%)"></div>
<div class="bn" style="left:57.7px;top:340.5px">500</div>
<div class="dot" style="left:64.9px;top:322.9px;width:17.2px;height:17.2px;background:radial-gradient(circle,rgba(255,255,255,1.00) 0,rgba(255,255,255,0.95) 18%,rgba(255,255,255,0.68) 38%,rgba(255,255,255,0.33) 58%,rgba(255,255,255,0.10) 78%,rgba(255,255,255,0) 100%)"></div>
<div class="bn" style="left:89.9px;top:340.5px">582</div>
<div class="bn" style="left:122.1px;top:340.5px">588</div>
<div class="bn" style="left:154.3px;top:340.5px">594</div>
<div class="dot" style="left:98.7px;top:325.0px;width:10px;height:10px;background:#6b6b6b"></div>
<div class="dot" style="left:130.9px;top:322.0px;width:20px;height:17px;border:1px solid #666;border-left-color:transparent;border-top-color:transparent;box-sizing:border-box"></div>
<div class="dot" style="left:130.9px;top:325.0px;width:10px;height:10px;background:#6b6b6b"></div>
<div class="dot" style="left:159.6px;top:322.0px;width:21px;height:17px;background:#5f5f5f;border:1px solid #696969;box-sizing:border-box"></div>
<div class="dot" style="left:162.1px;top:326.0px;width:11px;height:11px;background:#696969"></div>
<div class="a" style="left:155px;top:322px;width:32px;height:31px;border:1px solid #38a6e8;box-sizing:border-box"></div>
<div class="a" style="left:233px;top:224px;width:17px;height:129px;background:#4a4a4a"></div>
<div class="a" style="left:236px;top:289px;width:12px;height:48px;background:#6b6b6b"></div>
<svg style="left:237px;top:233px" width="10" height="6" viewBox="0 0 10 6"><path d="M1 5 L5 1 L9 5" fill="none" stroke="#8a8a8a" stroke-width="1.1"/></svg>
<svg style="left:237px;top:340px" width="10" height="6" viewBox="0 0 10 6"><path d="M1 1 L5 5 L9 1" fill="none" stroke="#b0b0b0" stroke-width="1.1"/></svg>
<svg style="left:274px;top:354px" width="8" height="8" viewBox="0 0 8 8"><path d="M1 7 L7 1 M4 7 L7 4" stroke="#6c6c6c" stroke-width="1"/></svg>
<div class="a" style="left:284px;top:96px;width:170px;height:440px;background:#f0f0f0;box-shadow:2px 2px 3px rgba(0,0,0,0.55);border-left:1px solid #d8d8d8;border-top:1px solid #d8d8d8;box-sizing:border-box"></div>
<div class="a" style="left:286px;top:417px;width:168px;height:21px;background:#0a74d6"></div>
<div class="mi" style="top:100.5px;color:#000">新建画笔预设...</div>
<div class="mi" style="top:130.7px;color:#000">重命名画笔...</div>
<div class="mi" style="top:151.3px;color:#000">删除画笔</div>
<div class="mi" style="top:181.5px;color:#000">仅文本</div>
<div class="mi" style="top:202.2px;color:#000">小缩览图</div>
<div class="mi" style="top:223.5px;color:#000">大缩览图</div>
<div class="mi" style="top:244.4px;color:#000">小列表</div>
<div class="mi" style="top:265.2px;color:#000">大列表</div>
<div class="mi" style="top:285.9px;color:#000">描边缩览图</div>
<div class="mi" style="top:316.5px;color:#000">显示近期画笔</div>
<div class="mi" style="top:345.7px;color:#000">预设管理器...</div>
<div class="mi" style="top:375.8px;color:#000">复位画笔...</div>
<div class="mi" style="top:396.5px;color:#000">载入画笔...</div>
<div class="mi" style="top:417.8px;color:#fff">存储画笔...</div>
<div class="mi" style="top:438.7px;color:#000">替换画笔...</div>
<div class="mi" style="top:468.9px;color:#000">混合画笔</div>
<div class="mi" style="top:489.5px;color:#000">基本画笔</div>
<div class="mi" style="top:510.1px;color:#000">书法画笔</div>
<div class="ms" style="top:122.5px"></div>
<div class="ms" style="top:174.0px"></div>
<div class="ms" style="top:309.3px"></div>
<div class="ms" style="top:339.5px"></div>
<div class="ms" style="top:368.9px"></div>
<div class="ms" style="top:462.2px"></div>
<svg style="left:288px;top:206.7px" width="11" height="10" viewBox="0 0 11 10"><path d="M1.2 5.2 L4 8.2 L9.8 1.5" fill="none" stroke="#000" stroke-width="2"/></svg>
<svg style="left:288px;top:321.0px" width="11" height="10" viewBox="0 0 11 10"><path d="M1.2 5.2 L4 8.2 L9.8 1.5" fill="none" stroke="#000" stroke-width="2"/></svg>
<svg style="left:0;top:0" width="797" height="528" viewBox="0 0 797 528"><polygon points="109,59.5 235,72.3 235.6,67.6 254.6,77.8 234,85 234.4,81.4 107,61.5" fill="#149a9c"/><rect x="256.2" y="67.8" width="29.6" height="30.4" fill="none" stroke="#149a9c" stroke-width="3.2"/><polygon points="270.3,122 271.6,122 290.6,380 292,406.8 296.6,404 287.5,416.8 279.8,404 283.6,406.6 282.5,380" fill="#149a9c"/><path d="M455 416.8 H286 V438.2 H455" fill="none" stroke="#149a9c" stroke-width="3.2"/></svg>
<svg style="left:0;top:0" width="797" height="528" viewBox="0 0 797 528"><g fill="#fff" transform="translate(630 470) scale(0.09852)"><polygon points="-83,283 370,28 505,165 415,165 362,112 150,228 130,250 60,285"/><polygon points="60,250 130,250 130,455 290,455 262,490 60,490"/><polygon points="130,250 225,250 345,178 500,178 490,215 355,215 270,262 270,285 130,285"/><polygon points="215,285 270,262 270,455 215,455"/><polygon points="130,347 215,347 215,382 130,382"/><polygon points="270,332 335,295 480,295 470,335 345,335 270,378"/><polygon points="270,418 335,382 455,382 446,420 345,420 270,458"/><polygon points="290,455 335,432 440,432 432,462 340,462 262,490"/><rect x="540" y="185" width="36" height="30"/><rect x="580" y="215" width="30" height="30"/><rect x="497" y="245" width="48" height="45"/><rect x="600" y="265" width="30" height="35"/><rect x="545" y="300" width="45" height="45"/><rect x="592" y="345" width="28" height="40"/><rect x="456" y="375" width="52" height="45"/><rect x="510" y="345" width="30" height="30"/><rect x="425" y="420" width="35" height="22"/></g></svg>
<div class="t" style="left:696px;top:480px;font-size:23px;line-height:30px;font-weight:900;color:#fff;font-family:'Liberation Sans','Noto Sans CJK SC',sans-serif;text-shadow:0 0 1px #333">系统之家</div>
<div class="t" id="wmurl" style="left:688px;top:509px;font-size:10px;line-height:12px;font-weight:bold;color:#fff;font-family:'Liberation Serif',serif;text-shadow:0 0 1px #444;">XITONGZHIJIA.NET</div>
<div class="a" style="left:0;top:0;width:795px;height:526px;border:1px solid #000;pointer-events:none"></div>
</body></html>
